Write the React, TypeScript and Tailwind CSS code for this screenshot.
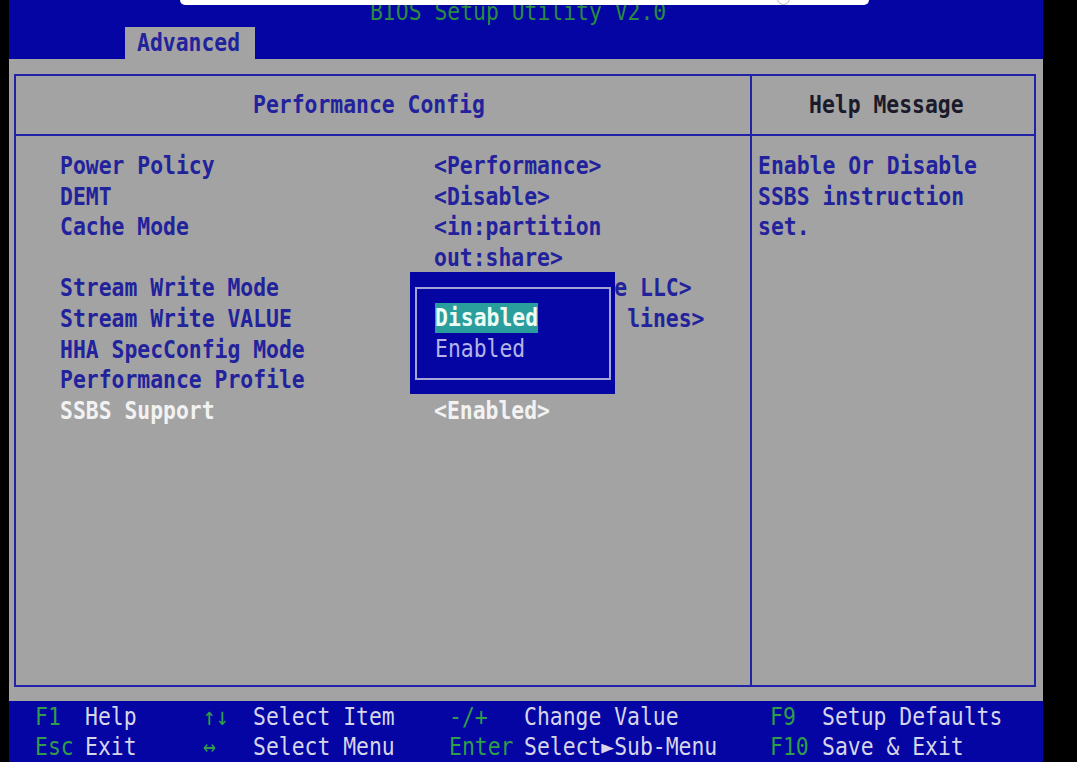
import clsx from "clsx";

const MONO = "font-['DejaVu_Sans_Mono','Liberation_Mono',monospace]";

const T = ({ children, className }: { children: React.ReactNode; className?: string }) => (
  <span className={clsx("inline-block scale-y-115 whitespace-pre", className)}>{children}</span>
);

// values partly covered by the popup only show their tail; indent is in characters
const items: { label: string; value: string[]; indent?: string; active?: boolean }[] = [
  { label: "Power Policy", value: ["<Performance>"] },
  { label: "DEMT", value: ["<Disable>"] },
  { label: "Cache Mode", value: ["<in:partition", "out:share>"] },
  { label: "Stream Write Mode", value: ["e LLC>"], indent: "pl-[14ch]" },
  { label: "Stream Write VALUE", value: ["lines>"], indent: "pl-[15ch]" },
  { label: "HHA SpecConfig Mode", value: [] },
  { label: "Performance Profile", value: [] },
  { label: "SSBS Support", value: ["<Enabled>"], active: true },
];

const footer = [
  [
    ["F1", "Help"],
    ["↑↓", "Select Item"],
    ["-/+", "Change Value"],
    ["F9", "Setup Defaults"],
  ],
  [
    ["Esc", "Exit"],
    ["↔", "Select Menu"],
    ["Enter", "Select►Sub-Menu"],
    ["F10", "Save & Exit"],
  ],
];

// column widths: key / description, measured off the 12.9px character grid
const keyW = ["w-[50px]", "w-[50px]", "w-[75px]", "w-[52px]"];
const descW = ["w-[118px]", "w-[196px]", "w-[246px]", "w-auto"];

export default function App() {
  return (
    <div className={clsx("w-[1081px] h-[765px] bg-white overflow-hidden text-[21.4px]", MONO)}>
      <div className="flex h-[762px]">
        <div className="w-[9px] bg-black" />

        <div className="w-[1034px] flex flex-col">
          {/* Top bar */}
          <div className="relative h-[59px] bg-[#0505a4] flex flex-col">
            <div className="h-[28px] pl-[361px] leading-[24px] text-[#2a8c40]">
              <T>BIOS Setup Utility V2.0</T>
            </div>
            <div className="flex-1 flex">
              <div className="ml-[116px] w-[130px] bg-[#a3a3a3] pl-[12px] leading-[32px] font-bold text-[#22229c]">
                <T>Advanced</T>
              </div>
            </div>
            <div className="absolute top-0 left-[171px] w-[689px] h-[5px] bg-white rounded-b-[6px]" />
            <div className="absolute -top-[8px] left-[768px] w-[13px] h-[13px] rounded-full border border-[#b8b8b8]" />
          </div>

          {/* Gray body */}
          <div className="h-[642px] bg-[#a3a3a3] pt-[15px] pb-[14px] pl-[5px] pr-[7px]">
            <div className="h-full border-2 border-[#2222a8] flex flex-col font-bold">
              <div className="h-[60px] flex border-b-2 border-[#2222a8]">
                <div className="w-[736px] border-r-2 border-[#2222a8] pl-[237px] flex items-center text-[#22229c]">
                  <T>Performance Config</T>
                </div>
                <div className="flex-1 pl-[57px] flex items-center text-[#1a1a2a]">
                  <T>Help Message</T>
                </div>
              </div>

              <div className="flex-1 flex">
                <div className="relative w-[736px] border-r-2 border-[#2222a8] pt-[15px] pl-[44px]">
                  <div className="grid grid-cols-[374px_1fr] leading-[30.6px]">
                    {items.map((it) => (
                      <div key={it.label} className="contents">
                        <div className={it.active ? "text-[#f2f2f2]" : "text-[#22229c]"}>
                          <T>{it.label}</T>
                        </div>
                        <div
                          className={clsx(
                            "flex flex-col",
                            it.indent,
                            it.active ? "text-[#f2f2f2]" : "text-[#22229c]",
                          )}
                        >
                          {it.value.map((v) => (
                            <div key={v}>
                              <T>{v}</T>
                            </div>
                          ))}
                        </div>
                      </div>
                    ))}
                  </div>

                  {/* option popup */}
                  <div className="absolute left-[394px] top-[136px] w-[205px] h-[122px] bg-[#0505a4] pt-[15px] pl-[5px] pr-[4px] pb-[14px]">
                    <div className="h-full border-2 border-[#a4a4d6] pt-[14px] pl-[18px] leading-[30px]">
                      <div>
                        <span className="inline-block bg-[#2a9e9c] text-[#eefcf6]">
                          <T>Disabled</T>
                        </span>
                      </div>
                      <div className="text-[#b4b4e6] font-normal mt-[1px]">
                        <T>Enabled</T>
                      </div>
                    </div>
                  </div>
                </div>

                <div className="flex-1 pt-[15px] pl-[6px] leading-[30.6px] text-[#22229c]">
                  <div><T>Enable Or Disable</T></div>
                  <div><T>SSBS instruction</T></div>
                  <div><T>set.</T></div>
                </div>
              </div>
            </div>
          </div>

          {/* Key legend */}
          <div className="h-[61px] bg-[#0505a4] pt-[1px] pl-[26px]">
            {footer.map((row, r) => (
              <div key={r} className="flex h-[30px] leading-[30px]">
                {row.map(([k, d], i) => (
                  <div key={k} className="flex">
                    <div className={clsx(keyW[i], "text-[#2f9e48]")}>
                      <T>{k}</T>
                    </div>
                    <div className={clsx(descW[i], "text-[#d6d6e8]")}>
                      <T>{d}</T>
                    </div>
                  </div>
                ))}
              </div>
            ))}
          </div>
        </div>

        <div className="w-[34px] bg-black" />
      </div>
    </div>
  );
}
